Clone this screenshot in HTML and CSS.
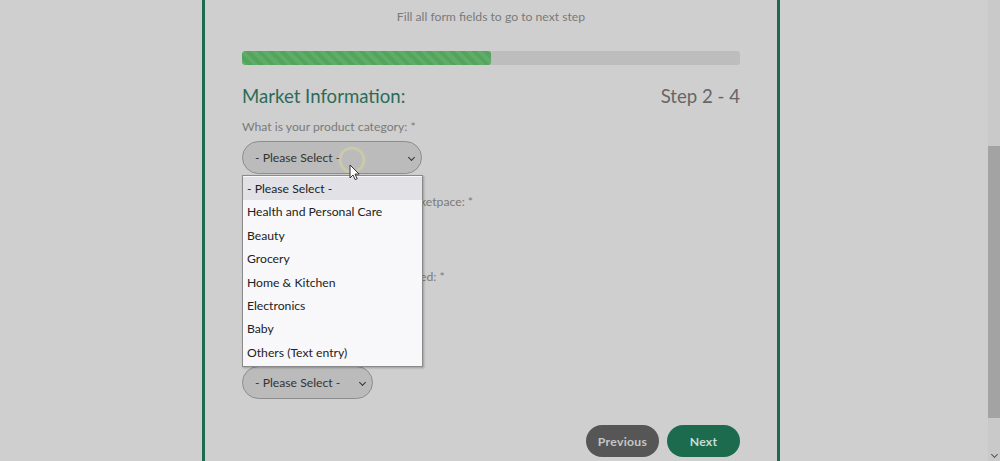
FILE: index.html
```html
<!DOCTYPE html>
<html lang="en">
<head>
<meta charset="utf-8">
<title>Market Information</title>
<link rel="stylesheet" href="styles.css">
</head>
<body>
<div class="page">
  <main class="viewport">
    <section class="card">
      <p class="hint">Fill all form fields to go to next step</p>
      <div class="progress"><div class="progress-fill" style="width:50%"></div></div>
      <div class="head">
        <h2 class="title">Market Information:</h2>
        <span class="step">Step 2 - 4</span>
      </div>

      <div class="field first">
        <label class="label">What is your product category: *</label>
        <div class="select-wrap">
          <div class="select wide">- Please Select -<span class="chev"></span></div>
          <ul class="menu">
            <li class="active">- Please Select -</li>
            <li>Health and Personal Care</li>
            <li>Beauty</li>
            <li>Grocery</li>
            <li>Home &amp; Kitchen</li>
            <li>Electronics</li>
            <li>Baby</li>
            <li>Others (Text entry)</li>
          </ul>
          <svg class="cursor" width="40" height="40" viewBox="0 0 40 40">
            <circle cx="14" cy="14" r="12" fill="none" stroke="#d6d6a0" stroke-width="3" opacity="0.55"/>
            <path d="M12 19 L12 32 L15 29 L17.2 33.6 L19.2 32.7 L17 28.1 L21.1 28.1 Z" fill="#fff" stroke="#333" stroke-width="1"/>
          </svg>
        </div>
      </div>

      <div class="field">
        <label class="label"><span class="lead">What is your main selling mar</span>ketpace: *</label>
        <div class="select wide covered">- Please Select -<span class="chev"></span></div>
      </div>

      <div class="field">
        <label class="label"><span class="lead">How many products are list</span>ed: *</label>
        <div class="select wide covered">- Please Select -<span class="chev"></span></div>
      </div>

      <div class="field">
        <label class="label covered">Brand registry: *</label>
        <div class="select narrow">- Please Select -<span class="chev"></span></div>
      </div>

      <div class="actions">
        <button class="btn prev">Previous</button>
        <button class="btn next">Next</button>
      </div>
    </section>
  </main>
  <div class="scrollbar">
    <div class="thumb"></div>
    <span class="arrow"></span>
  </div>
</div>
</body>
</html>
```

FILE: styles.css
```css
* { box-sizing: border-box; }
html, body { margin: 0; padding: 0; }
body {
  width: 1000px;
  height: 461px;
  overflow: hidden;
  background: #cfcfcf;
  font-family: "Lato", "Open Sans", sans-serif;
  color: #333;
}
.page {
  display: flex;
  height: 461px;
}
.viewport {
  flex: 1;
  padding-left: 202px;
}
.card {
  width: 578px;
  height: 461px;
  border-left: 3px solid #1d6b4f;
  border-right: 3px solid #1d6b4f;
  padding: 0 37px;
  display: flex;
  flex-direction: column;
}
.hint {
  margin: 8px 0 0;
  text-align: center;
  font-size: 12.2px;
  color: #7a7a7a;
  line-height: 18px;
}
.progress {
  margin-top: 25px;
  height: 14px;
  border-radius: 3px;
  background: #bdbdbd;
  overflow: hidden;
}
.progress-fill {
  height: 100%;
  border-radius: 3px;
  background-color: #52a55b;
  background-image: repeating-linear-gradient(45deg, rgba(255,255,255,0.08) 0 4px, transparent 4px 8px);
}
.head {
  display: flex;
  justify-content: space-between;
  align-items: center;
  margin-top: 18px;
  height: 26px;
}
.title {
  margin: 0;
  font-size: 18.6px;
  font-weight: 400;
  color: #2c6b57;
}
.step {
  font-size: 18.6px;
  color: #666;
}
.field {
  display: flex;
  flex-direction: column;
  align-items: flex-start;
  height: 75px;
}
.field.first { margin-top: 9px; }
.label {
  font-size: 12.2px;
  color: #7a7a7a;
  line-height: 18px;
  margin-bottom: 5px;
  white-space: nowrap;
}
.covered { visibility: hidden; }
.lead {
  display: inline-block;
  width: 178px;
  overflow: hidden;
  vertical-align: top;
  visibility: hidden;
}
.select-wrap { position: relative; }
.select {
  position: relative;
  height: 33px;
  border: 1px solid #8d8d8d;
  border-radius: 17px;
  background: #bbbbbb;
  font-size: 12.2px;
  color: #333;
  padding-left: 12px;
  display: flex;
  align-items: center;
}
.select.wide { width: 180px; }
.select.narrow { width: 131px; }
.chev {
  position: absolute;
  right: 7px;
  top: 13px;
  width: 5px;
  height: 5px;
  border-right: 1.5px solid #333;
  border-bottom: 1.5px solid #333;
  transform: rotate(45deg);
}
.menu {
  position: absolute;
  left: 0;
  top: 34px;
  width: 181px;
  margin: 0;
  padding: 1px 0 2px;
  list-style: none;
  background: #f8f8fa;
  border: 1px solid #8a8a8a;
  box-shadow: 1px 1px 2px rgba(0,0,0,0.25);
  z-index: 5;
}
.menu li {
  height: 23.4px;
  line-height: 23.4px;
  padding-left: 4px;
  font-size: 12.2px;
  color: #222;
}
.menu li.active { background: #e2e2e6; }
.cursor {
  position: absolute;
  left: 96px;
  top: 5px;
  z-index: 6;
}
.actions {
  display: flex;
  justify-content: flex-end;
  gap: 8px;
  margin-top: 7px;
}
.btn {
  width: 73px;
  height: 32px;
  border: none;
  border-radius: 16px;
  font-family: "Lato", "Open Sans", sans-serif;
  font-size: 12.2px;
  font-weight: 700;
  letter-spacing: 0.3px;
  cursor: pointer;
}
.btn.prev { background: #565656; color: #c6c6c6; }
.btn.next { background: #1d6b4f; color: #c9dfd5; }
.scrollbar {
  width: 12px;
  height: 461px;
  background: #c9c9c9;
  display: flex;
  flex-direction: column;
  align-items: center;
  padding-top: 146px;
}
.thumb {
  width: 12px;
  height: 272px;
  background: #a3a3a3;
}
.arrow {
  margin-top: 34px;
  width: 5px;
  height: 5px;
  border-right: 1.5px solid #555;
  border-bottom: 1.5px solid #555;
  transform: rotate(45deg);
}
```
